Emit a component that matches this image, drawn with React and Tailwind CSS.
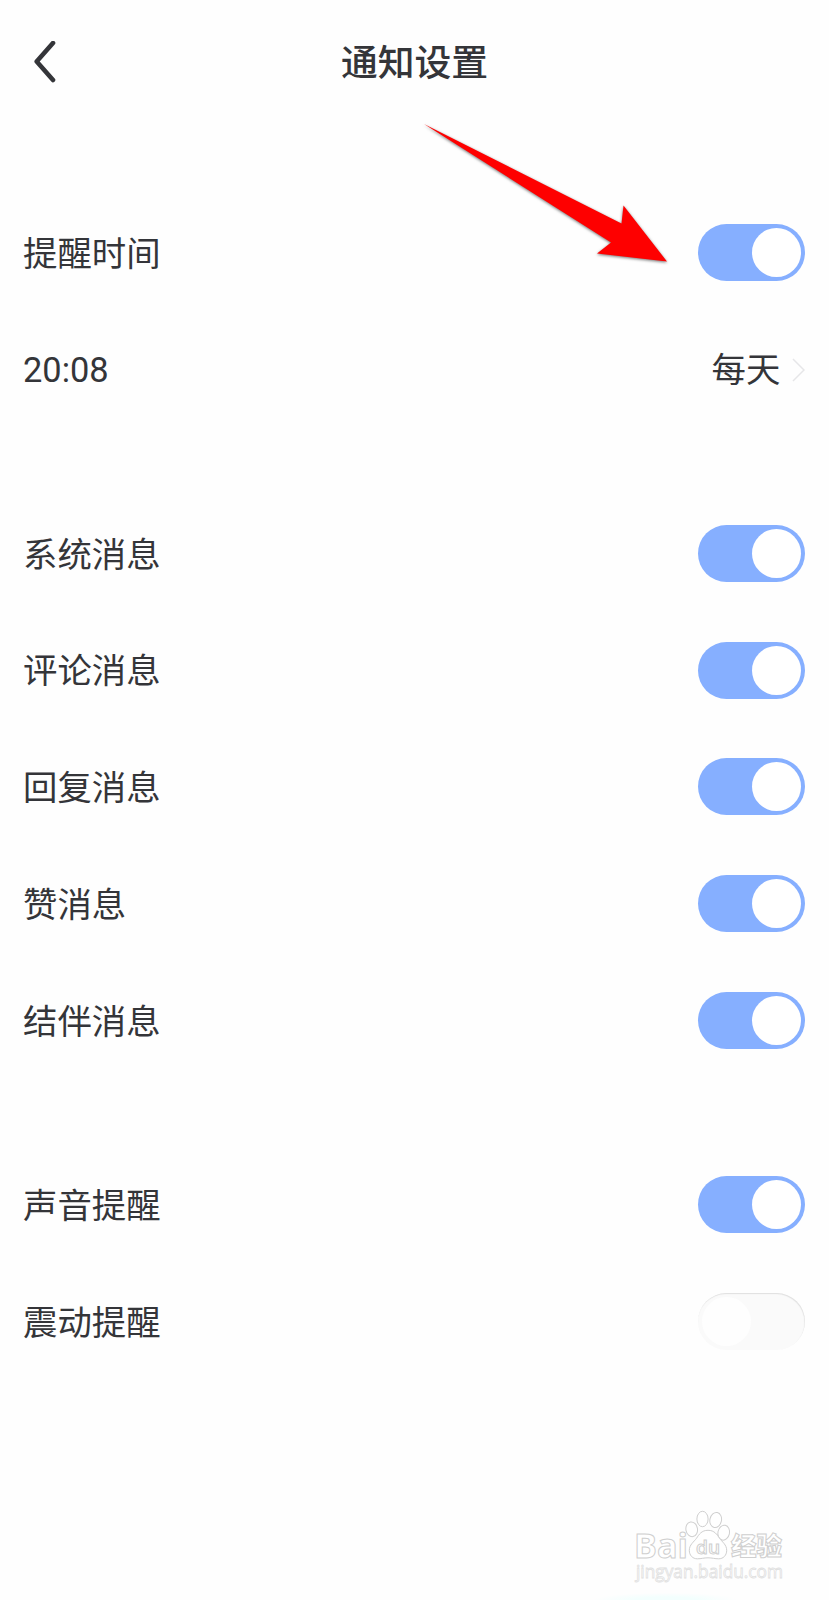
const sections = [
  [
    { label: '提醒时间', on: true },
    { label: '20:08', value: '每天' },
  ],
  [
    { label: '系统消息', on: true },
    { label: '评论消息', on: true },
    { label: '回复消息', on: true },
    { label: '赞消息', on: true },
    { label: '结伴消息', on: true },
  ],
  [
    { label: '声音提醒', on: true },
    { label: '震动提醒', on: false },
  ],
];

function Toggle({ on }) {
  return on ? (
    <button role="switch" aria-checked="true" className="flex h-[57px] w-[107.4px] items-center justify-end rounded-full bg-[#86afff] p-1">
      <span className="size-[49px] rounded-full bg-white" />
    </button>
  ) : (
    <button role="switch" aria-checked="false" className="flex h-[57px] w-[107.4px] items-center rounded-full bg-[#fafafa] p-1 shadow-[inset_-0.5px_1px_1px_#dfdfdf]">
      <span className="size-[49px] rounded-full bg-[#fefefe]" />
    </button>
  );
}

function Row({ label, value, on }) {
  return (
    <div className="flex h-[116.8px] items-center justify-between pl-[23px] pr-[23.6px]">
      <span className="pt-[3px]">{label}</span>
      {value ? (
        <span className="flex items-center">
          <span className="pt-[3px]">{value}</span>
          <svg className="ml-[11px] mt-[2px] h-6 w-[14px]" viewBox="0 0 14 24" fill="none" stroke="#e6e6e8" strokeWidth="1.5">
            <path d="M2 1 13 12 2 23" />
          </svg>
        </span>
      ) : (
        <Toggle on={on} />
      )}
    </div>
  );
}

function Watermark() {
  return (
    <svg className="absolute left-[630px] top-[1500px]" width="165" height="90" viewBox="0 -5 165 90" fill="#fff" stroke="#cfcfcf" strokeWidth="1">
      <g fontFamily="Open Sans, sans-serif">
        <text x="4" y="53" fontSize="34.500" fontWeight="700" textLength="54" lengthAdjust="spacingAndGlyphs">Bai</text>
        <ellipse cx="61.700" cy="24.300" rx="5.800" ry="7.400" transform="rotate(-10 61.7 24.3)" />
        <ellipse cx="72.500" cy="14" rx="5.600" ry="7.700" />
        <ellipse cx="85.700" cy="15" rx="5.800" ry="7.600" transform="rotate(12 85.7 15)" />
        <ellipse cx="93.700" cy="27.700" rx="5.800" ry="7.500" transform="rotate(12 93.7 27.7)" />
        <path d="M78 25.300c-6.500 0-9 4.200-11.500 8-2.500 3.400-7.200 6.500-7.200 12 0 5.200 3.500 8.500 8 8.500 4 0 6.500-1 10.700-1s6.700 1 10.700 1c4.500 0 8-3.300 8-8.500 0-5.500-4.700-8.600-7.200-12-2.500-3.800-5-8-11.500-8Z" />
        <text x="66" y="49" fontSize="18" fontWeight="600" textLength="24" lengthAdjust="spacingAndGlyphs">du</text>
        <text x="6" y="73" fontSize="18" stroke="#e0e0e0" strokeWidth="0.8" textLength="147" lengthAdjust="spacingAndGlyphs">jingyan.baidu.com</text>
      </g>
      <text x="101" y="50" fontSize="25.500" fontWeight="900" fontFamily="Noto Sans CJK SC, sans-serif" textLength="51" lengthAdjust="spacingAndGlyphs">经验</text>
    </svg>
  );
}

export default function App() {
  return (
    <main className="relative h-[1600px] w-[829px] overflow-hidden bg-[#fefefe] font-[Roboto,'Noto_Sans_CJK_SC',sans-serif] text-[34.4px] leading-none text-[#343539]">
      <header className="grid h-[124px] grid-cols-[100px_1fr_100px] items-center">
        <button aria-label="返回" className="pl-[34px]">
          <svg width="23" height="42" viewBox="0 0 23 42" fill="none" stroke="#343539" strokeWidth="4.6" strokeLinecap="round" strokeLinejoin="round">
            <path d="M19 2 2.700 20.500 19 39" />
          </svg>
        </button>
        <h1 className="pt-[5px] text-center text-[36.8px] font-medium">通知设置</h1>
      </header>
      <div className="flex flex-col gap-[67.4px] pt-[70px]">
        {sections.map((rows, i) => (
          <section key={i}>
            {rows.map((row) => (
              <Row key={row.label} {...row} />
            ))}
          </section>
        ))}
      </div>
      <svg className="absolute left-[410px] top-[110px] drop-shadow-[0_1px_1.5px_rgba(0,0,0,0.55)]" width="270" height="170">
        <path d="M14 14 211.500 113.500 213.500 95.500 257 151.500 187 143.500 201 132.500Z" fill="#fe0000" />
      </svg>
      <div className="absolute bottom-0 left-[595px] h-[7px] w-[142px] bg-[radial-gradient(ellipse_at_bottom,#f3fffe_30%,transparent_72%)]" />
      <Watermark />
    </main>
  );
}
